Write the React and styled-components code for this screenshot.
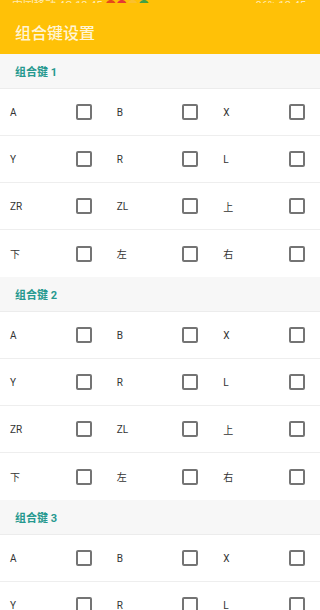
import styled, { createGlobalStyle } from 'styled-components'

const Global = createGlobalStyle`
  body {
    margin: 0;
    background: #fff;
    font-family: Roboto, "Noto Sans CJK SC", sans-serif;
  }
`

const Page = styled.div`
  width: 320px;
  height: 610px;
  overflow: hidden;
  background: #fff;
`

const AppBar = styled.header`
  background: #ffc107;
  height: 54px;
  display: flex;
  flex-direction: column;
`

const StatusBar = styled.div`
  height: 3px;
  overflow: hidden;
  display: flex;
  align-items: flex-end;
  justify-content: space-between;
  padding: 0 14px 0 12px;
  color: rgba(255, 255, 255, 0.7);
  font-size: 11px;
  line-height: 11px;
  & > span {
    white-space: nowrap;
    transform: translateY(8px);
  }
`

const Dot = styled.i`
  font-style: normal;
  color: ${(p) => p.c};
`

const Title = styled.h1`
  flex: 1;
  margin: 0;
  padding: 6px 15px 0;
  display: flex;
  align-items: center;
  font-size: 16px;
  font-weight: 500;
  color: #fff5d6;
`

const SectionHead = styled.div`
  height: 35px;
  background: #f7f7f7;
  border-bottom: 1px solid #ececec;
  box-sizing: border-box;
  display: flex;
  align-items: center;
  padding: 0 15px;
  font-size: 11px;
  font-weight: 700;
  color: #26998f;
`

const Row = styled.div`
  height: 47px;
  box-sizing: border-box;
  display: grid;
  grid-template-columns: repeat(3, 1fr);
  border-bottom: ${(p) => (p.last ? 'none' : '1px solid #eeeeee')};
`

const Cell = styled.div`
  display: flex;
  align-items: center;
  justify-content: space-between;
  padding: 0 15px 0 10px;
`

const Key = styled.span`
  font-size: 10px;
  color: #333333;
`

const Box = styled.span`
  width: 16px;
  height: 16px;
  box-sizing: border-box;
  border: 2px solid #747474;
  border-radius: 2px;
`

const rows = [
  ['A', 'B', 'X'],
  ['Y', 'R', 'L'],
  ['ZR', 'ZL', '上'],
  ['下', '左', '右'],
]

const Section = ({ n }) => (
  <>
    <SectionHead>组合键 {n}</SectionHead>
    {rows.map((r, i) => (
      <Row key={i} last={i === rows.length - 1}>
        {r.map((k) => (
          <Cell key={k}>
            <Key>{k}</Key>
            <Box />
          </Cell>
        ))}
      </Row>
    ))}
  </>
)

export default function App() {
  return (
    <Page>
      <Global />
      <AppBar>
        <StatusBar>
          <span>
            中国移动 4G 12:45 <Dot c="#e64a19">●</Dot><Dot c="#e53935">●</Dot>
            <Dot c="#fbc02d">●</Dot><Dot c="#43a047">●</Dot>
          </span>
          <span>86% 12:45</span>
        </StatusBar>
        <Title>组合键设置</Title>
      </AppBar>
      <Section n={1} />
      <Section n={2} />
      <Section n={3} />
    </Page>
  )
}
